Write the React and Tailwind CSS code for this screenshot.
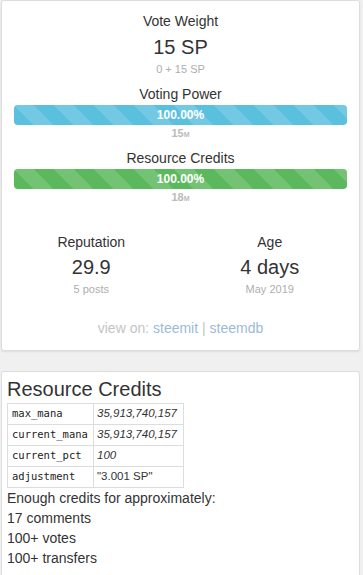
const stripes =
  'bg-[linear-gradient(45deg,rgba(255,255,255,.15)_25%,transparent_25%,transparent_50%,rgba(255,255,255,.15)_50%,rgba(255,255,255,.15)_75%,transparent_75%,transparent)] bg-[length:40px_40px]'

function Bar({ color }) {
  return (
    <div className="mx-3 h-5 rounded overflow-hidden bg-[#f5f5f5] shadow-[inset_0_1px_2px_rgba(0,0,0,.1)]">
      <div className={`h-full w-full ${color} ${stripes} text-white text-[12px] leading-5 font-bold text-center`}>
        100.00%
      </div>
    </div>
  )
}

function Mana({ value }) {
  return (
    <div className="text-[11px] leading-4 font-bold text-[#bbb] text-center">
      {value}
      <span className="text-[7px]">M</span>
    </div>
  )
}

const rows = [
  ['max_mana', '35,913,740,157', true],
  ['current_mana', '35,913,740,157', true],
  ['current_pct', '100', true],
  ['adjustment', '"3.001 SP"', false],
]

export default function App() {
  return (
    <div className="min-h-[575px] bg-[#f0f0f0] font-['Liberation_Sans',Arial,sans-serif] text-[#333]">
      {/* account summary */}
      <div className="ml-px w-[359px] h-[351px] bg-white border border-[#ddd] rounded-[3px] shadow-[0_1px_2px_rgba(0,0,0,.08)] pt-[10px]">
        <div className="text-center text-[14px] leading-5">Vote Weight</div>
        <div className="text-center text-[20px] leading-7 mt-[2px]">15 SP</div>
        <div className="text-center text-[11px] leading-4 text-[#aeaeae]">0 + 15 SP</div>

        <div className="text-center text-[14px] leading-5 mt-[7px]">Voting Power</div>
        <div className="mt-px">
          <Bar color="bg-[#5bc0de]" />
        </div>
        <Mana value="15" />

        <div className="text-center text-[14px] leading-5 mt-[5px]">Resource Credits</div>
        <div className="mt-px">
          <Bar color="bg-[#5cb85c]" />
        </div>
        <Mana value="18" />

        <div className="grid grid-cols-2 mt-[25px] text-center">
          <div>
            <div className="text-[14px] leading-5">Reputation</div>
            <div className="text-[20px] leading-7 mt-px">29.9</div>
            <div className="text-[11px] leading-4 text-[#aeaeae]">5 posts</div>
          </div>
          <div>
            <div className="text-[14px] leading-5">Age</div>
            <div className="text-[20px] leading-7 mt-px">4 days</div>
            <div className="text-[11px] leading-4 text-[#aeaeae]">May 2019</div>
          </div>
        </div>

        <div className="text-center text-[14px] leading-5 mt-[21px] text-[#c4c4c4]">
          view on: <span className="text-[#9bbbd6]">steemit</span> | <span className="text-[#9bbbd6]">steemdb</span>
        </div>
      </div>

      {/* resource credits detail */}
      <div className="ml-px mt-[20px] w-[359px] h-[210px] bg-white border border-[#ddd] border-b-0 rounded-t-[3px] pt-[5px] px-[5px]">
        <div className="text-[20px] leading-6">Resource Credits</div>
        <table className="mt-[2px] border-collapse border border-[#ddd]">
          <tbody>
            {rows.map(([k, v, it]) => (
              <tr key={k} className="h-[21px]">
                <td className="border border-[#ddd] w-[86px] px-[4px] font-['DejaVu_Sans_Mono',monospace] text-[10.5px] text-[#222]">
                  {k}
                </td>
                <td className={`border border-[#ddd] w-[90px] px-[3px] text-[11.5px] ${it ? 'italic' : ''}`}>{v}</td>
              </tr>
            ))}
          </tbody>
        </table>
        <div className="text-[14px] leading-5">Enough credits for approximately:</div>
        <div className="text-[14px] leading-5">17 comments</div>
        <div className="text-[14px] leading-5">100+ votes</div>
        <div className="text-[14px] leading-5">100+ transfers</div>
      </div>
    </div>
  )
}
